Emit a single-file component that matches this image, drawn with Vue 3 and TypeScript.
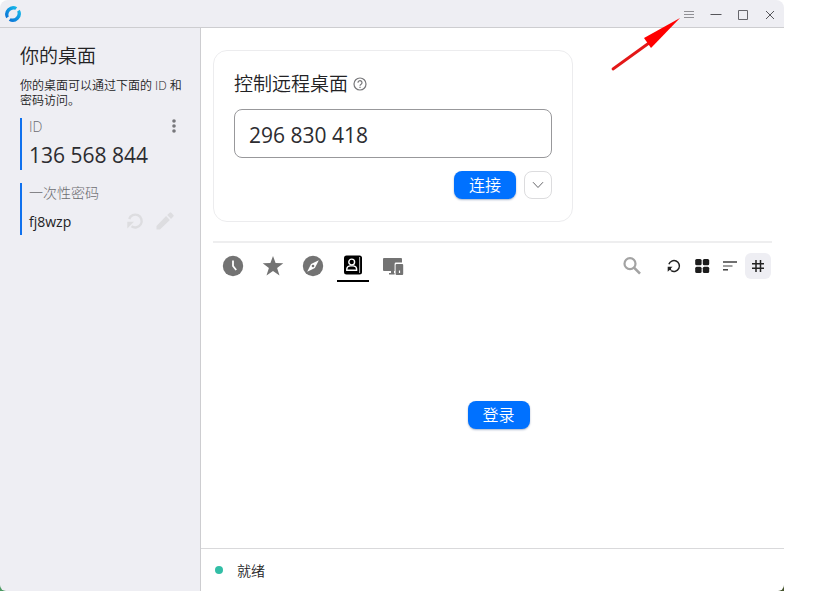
<script setup lang="ts">
import { ref } from 'vue'

const remoteId = ref('296 830 418')
const activeTab = ref('book')

const tabs = [
  { id: 'recent', label: '最近访问过' },
  { id: 'favorites', label: '收藏' },
  { id: 'discovered', label: '已发现' },
  { id: 'book', label: '地址簿' },
  { id: 'devices', label: '可访问的设备' },
]
</script>

<template>
  <div class="page">
    <div class="window">
      <header class="titlebar">
        <svg class="logo" viewBox="0 0 18 18" aria-hidden="true">
          <defs>
            <linearGradient id="logo-fill" x1="1" y1="0" x2="0" y2="1">
              <stop offset="0" stop-color="#18bdea" />
              <stop offset="1" stop-color="#0a6fd6" />
            </linearGradient>
          </defs>
          <g fill="url(#logo-fill)">
            <path d="M13.2 2.2A8.1 8.1 0 0 0 2.2 13.2L4.8 11.4A5.1 5.1 0 0 1 11.4 4.8Z" />
            <path d="M4.8 15.8A8.1 8.1 0 0 0 15.8 4.8L13.2 6.6A5.1 5.1 0 0 1 6.6 13.2Z" />
          </g>
        </svg>
        <div class="window-controls">
          <button type="button" aria-label="菜单">
            <svg viewBox="0 0 12 12"><path d="M1 2.5h10M1 5.5h10M1 8.5h10" stroke="#909095" fill="none" /></svg>
          </button>
          <button type="button" aria-label="最小化">
            <svg viewBox="0 0 12 12"><path d="M0.5 5.5h11" stroke="#55555a" fill="none" /></svg>
          </button>
          <button type="button" aria-label="最大化">
            <svg viewBox="0 0 12 12"><path d="M1.5 1.5h9v9h-9z" stroke="#66666b" fill="none" /></svg>
          </button>
          <button type="button" aria-label="关闭">
            <svg viewBox="0 0 12 12"><path d="M2 2l8 8M10 2l-8 8" stroke="#55555a" fill="none" /></svg>
          </button>
        </div>
      </header>

      <div class="body">
        <aside class="sidebar">
          <h1>你的桌面</h1>
          <p class="hint">你的桌面可以通过下面的 ID 和密码访问。</p>
          <section class="field">
            <div class="field-row id-row">
              <span class="caption">ID</span>
              <button type="button" class="plain more" aria-label="更多">
                <svg viewBox="0 0 18 18" fill="#77777b">
                  <circle cx="9" cy="4" r="1.8" /><circle cx="9" cy="9" r="1.8" /><circle cx="9" cy="14" r="1.8" />
                </svg>
              </button>
            </div>
            <div class="own-id">136 568 844</div>
          </section>
          <section class="field">
            <div class="field-row"><span class="caption">一次性密码</span></div>
            <div class="field-row password-row">
              <span class="password">fj8wzp</span>
              <button type="button" class="plain" aria-label="刷新密码">
                <svg viewBox="0 0 20 20">
                  <path d="M4.2 8A6.4 6.4 0 1 1 6.5 15.2" fill="none" stroke="#dddde0" stroke-width="2.4" />
                  <path d="M2.3 17.5V10.8H9Z" fill="#dddde0" />
                </svg>
              </button>
              <button type="button" class="plain" aria-label="修改密码">
                <svg viewBox="0 0 20 20" fill="#dddde0">
                  <path d="M1.5 15v3.5H5L14.9 8.9 11.1 5.1zM18.4 5.6a1.2 1.2 0 0 0 0-1.7L16.3 1.8a1.2 1.2 0 0 0-1.7 0L12.2 4.1l3.8 3.8z" />
                </svg>
              </button>
            </div>
          </section>
        </aside>

        <main class="main">
          <div class="content">
            <form class="card" @submit.prevent>
              <div class="card-title">
                <label for="remote-id">控制远程桌面</label>
                <svg viewBox="0 0 14 16" fill="none" stroke="#77777a" stroke-width="1.2" aria-hidden="true">
                  <circle cx="7" cy="9" r="6" />
                  <path d="M5 7.7a2 2 0 1 1 3.1 1.6C7.3 9.8 7 10 7 10.8M7 11.7v1.2" />
                </svg>
              </div>
              <input id="remote-id" v-model="remoteId" type="text" />
              <div class="actions">
                <button type="submit" class="primary">连接</button>
                <button type="button" class="drop" aria-label="更多连接方式">
                  <svg viewBox="0 0 12 12"><path d="M1 3.2l5 5.3 5-5.3" fill="none" stroke="#66666a" /></svg>
                </button>
              </div>
            </form>

            <div class="toolbar">
              <nav class="tabs">
                <button
                  v-for="tab in tabs"
                  :key="tab.id"
                  type="button"
                  class="tab"
                  :class="{ active: tab.id === activeTab }"
                  :aria-label="tab.label"
                  @click="activeTab = tab.id"
                >
                  <svg v-if="tab.id === 'recent'" viewBox="0 0 22 22">
                    <circle cx="11" cy="11" r="10.2" fill="currentColor" />
                    <path d="M11 5.5V11l3.2 4" fill="none" stroke="#fff" stroke-width="1.8" />
                  </svg>
                  <svg v-else-if="tab.id === 'favorites'" viewBox="0 0 22 22">
                    <path d="M11 1l2.6 7 7.7.2-6.2 4.7 2.4 7.7L11 16.1l-6.5 4.5 2.4-7.7L.7 8.2l7.7-.2z" fill="currentColor" />
                  </svg>
                  <svg v-else-if="tab.id === 'discovered'" viewBox="0 0 22 22">
                    <circle cx="11" cy="11" r="10.2" fill="currentColor" />
                    <path d="M16.8 5.2l-3.9 7.7-7.7 3.9 3.9-7.7z" fill="#fff" />
                    <circle cx="11" cy="11" r="1.3" fill="currentColor" />
                  </svg>
                  <svg v-else-if="tab.id === 'book'" viewBox="0 0 22 22">
                    <rect x="2" y="0.5" width="18" height="19" rx="2.5" fill="currentColor" />
                    <path d="M17.6 2v16" stroke="#bbb" />
                    <circle cx="9.7" cy="7" r="2.9" fill="none" stroke="#fff" stroke-width="1.4" />
                    <path d="M4.8 15.3v-1.2c0-2 1.7-3 3.2-3.2h3.4c1.5.2 3.2 1.2 3.2 3.2v1.2z" fill="none" stroke="#fff" stroke-width="1.4" />
                  </svg>
                  <svg v-else viewBox="0 0 22 22">
                    <path d="M2 3h17a1 1 0 0 1 1 1v3.5H14a1.4 1.4 0 0 0-1.4 1.4V16H12v2h.6v1.5H7V18h2v-2H2a1 1 0 0 1-1-1V4a1 1 0 0 1 1-1z" fill="currentColor" />
                    <path fill-rule="evenodd" d="M14.6 9h5.6a1 1 0 0 1 1 1v9a1 1 0 0 1-1 1h-5.6a1 1 0 0 1-1-1v-9a1 1 0 0 1 1-1zm2.3 6.6v2.4h1.2v-2.4z" fill="currentColor" />
                  </svg>
                </button>
              </nav>
              <div class="tools">
                <button type="button" class="tool search" aria-label="搜索">
                  <svg viewBox="0 0 20 20" fill="none" stroke="#a3a3a3">
                    <circle cx="8" cy="7.7" r="5.5" stroke-width="2.2" />
                    <path d="M12 11.7l6 6" stroke-width="2.6" />
                  </svg>
                </button>
                <button type="button" class="tool" aria-label="刷新">
                  <svg viewBox="0 0 20 20">
                    <path d="M4.9 8.3A5.4 5.4 0 1 1 7.2 14.6" fill="none" stroke="#222" stroke-width="1.5" />
                    <path d="M3.7 15.7V10.8H8.6L6.9 12.3 7.5 14.8 5.6 14z" fill="#222" />
                  </svg>
                </button>
                <button type="button" class="tool" aria-label="视图">
                  <svg viewBox="0 0 20 20" fill="#1c1c1c">
                    <rect x="3.2" y="3" width="6.4" height="6.2" rx="1.5" />
                    <rect x="10.8" y="3" width="6.4" height="6.2" rx="1.5" />
                    <rect x="3.2" y="10.8" width="6.4" height="6.2" rx="1.5" />
                    <rect x="10.8" y="10.8" width="6.4" height="6.2" rx="1.5" />
                  </svg>
                </button>
                <button type="button" class="tool" aria-label="排序">
                  <svg viewBox="0 0 20 20" fill="none" stroke="#333" stroke-width="1.4">
                    <path d="M3 6h14" /><path d="M3 10h9.5" stroke="#777" /><path d="M3 13.8h5" />
                  </svg>
                </button>
                <button type="button" class="tool selected" aria-label="标签">
                  <svg viewBox="0 0 20 20" fill="none" stroke="#222" stroke-width="1.5">
                    <path d="M8 4v12M12.5 4v12M4 7.7h12M4 12.3h12" />
                  </svg>
                </button>
              </div>
            </div>

            <div class="empty">
              <button type="button" class="primary">登录</button>
            </div>
          </div>

          <footer class="status"><span class="dot"></span>就绪</footer>
        </main>
      </div>

      <svg class="pointer" viewBox="0 0 70 54" aria-hidden="true">
        <path d="M2 51L38 25" stroke="#e31818" stroke-width="2.8" stroke-linecap="round" />
        <path d="M69 0L33 20l7 10z" fill="#f00" />
      </svg>
    </div>
  </div>
</template>

<style>
body {
  background: #fff;
}
</style>

<style scoped>
* {
  box-sizing: border-box;
}
.page {
  min-height: 100vh;
  padding-right: 35px;
  display: flex;
  background:
    linear-gradient(#4c9a62, #4c9a62) left bottom / 6px 6px no-repeat,
    linear-gradient(#46552f, #46552f) right 35px bottom / 6px 6px no-repeat,
    #fff;
  color: #222224;
  font-family: "Open Sans", "Noto Sans CJK SC", sans-serif;
  font-size: 14px;
  font-weight: 350;
}
button,
input {
  font: inherit;
  color: inherit;
}
button {
  padding: 0;
  border: 0;
  background: none;
}
svg {
  display: block;
}
.window {
  position: relative;
  flex: 1;
  min-width: 0;
  display: flex;
  flex-direction: column;
  border-radius: 8px 8px 6px 6px;
  overflow: hidden;
}
.titlebar {
  height: 28px;
  flex: none;
  display: flex;
  align-items: center;
  justify-content: space-between;
  padding: 0 7px 0 4px;
  background: #eeeef3;
  border-bottom: 1px solid #cdcdd0;
}
.logo {
  width: 18px;
  height: 18px;
}
.window-controls {
  display: flex;
  gap: 13px;
  padding-top: 2px;
}
.window-controls button {
  width: 14px;
  height: 14px;
  display: grid;
  place-items: center;
}
.window-controls svg {
  width: 12px;
  height: 12px;
}
.body {
  flex: 1;
  display: flex;
}
.sidebar {
  width: 201px;
  flex: none;
  padding: 14px 16px 0 20px;
  background: #eeeef3;
  border-right: 1px solid #cdcdd0;
}
h1 {
  margin: 0;
  font-size: 19px;
  line-height: 28px;
  font-weight: 350;
}
.hint {
  margin: 8px 0 10px;
  font-size: 12px;
  line-height: 15px;
}
.field {
  height: 52px;
  margin-bottom: 13px;
  padding-left: 7px;
  border-left: 2px solid #0f71ee;
}
.field-row {
  display: flex;
  align-items: center;
  height: 18px;
}
.id-row {
  height: 16px;
  padding-right: 1px;
}
.caption {
  flex: 1;
  color: #6c6c70;
  font-weight: 300;
}
.plain {
  width: 20px;
  height: 20px;
}
.more {
  width: 18px;
  height: 18px;
}
.more svg {
  width: 18px;
  height: 18px;
}
.own-id {
  color: #2c2c30;
  font-size: 21px;
  line-height: 42px;
  font-weight: 400;
}
.password-row {
  height: 40px;
  gap: 10px;
  padding-right: 9px;
}
.password {
  flex: 1;
  font-weight: 400;
}
.main {
  flex: 1;
  min-width: 0;
  display: flex;
  flex-direction: column;
  background: #fff;
}
.content {
  flex: 1;
  display: flex;
  flex-direction: column;
  padding: 22px 12px 0;
}
.card {
  width: 360px;
  max-width: 100%;
  padding: 18px 20px 22px;
  border: 1px solid #ececee;
  border-radius: 14px;
}
.card-title {
  display: flex;
  align-items: center;
  gap: 5px;
  height: 28px;
  font-size: 19px;
}
.card-title svg {
  width: 14px;
  height: 16px;
}
.card input {
  display: block;
  width: 100%;
  height: 49px;
  margin: 12px 0 13px;
  padding: 2px 14px 0;
  border: 1px solid #98989b;
  border-radius: 8px;
  outline: none;
  background: #fff;
  color: #2c2c30;
  font-size: 21px;
  font-weight: 400;
}
.actions {
  display: flex;
  justify-content: flex-end;
  gap: 8px;
}
.primary {
  width: 62px;
  height: 28px;
  border-radius: 8px;
  background: #0071ff;
  box-shadow: 0 1px 2px rgba(0, 40, 100, 0.35);
  color: #fff;
  font-size: 16px;
  line-height: 28px;
}
.drop {
  width: 28px;
  height: 28px;
  display: grid;
  place-items: center;
  border: 1px solid #dcdcde;
  border-radius: 8px;
}
.drop svg {
  width: 12px;
  height: 12px;
}
.toolbar {
  display: flex;
  justify-content: space-between;
  margin-top: 19px;
  padding: 9px 1px 0 4px;
  border-top: 2px solid #eeeeef;
}
.tabs {
  display: flex;
  gap: 8px;
}
.tab {
  width: 32px;
  height: 30px;
  display: flex;
  justify-content: center;
  padding-top: 3px;
  border-bottom: 2px solid transparent;
  color: #737373;
}
.tab.active {
  color: #000;
  border-color: #000;
}
.tab svg {
  width: 22px;
  height: 22px;
}
.tools {
  display: flex;
  gap: 2px;
  padding-top: 1px;
}
.tool {
  width: 26px;
  height: 26px;
  display: grid;
  place-items: center;
  border-radius: 6px;
}
.tool svg {
  width: 20px;
  height: 20px;
}
.search {
  margin-right: 14px;
}
.selected {
  background: #eeeef3;
}
.empty {
  flex: 1;
  display: grid;
  place-items: center;
  padding-left: 12px;
}
.status {
  height: 43px;
  flex: none;
  display: flex;
  align-items: center;
  gap: 14px;
  padding-left: 14px;
  border-top: 1px solid #d9d9db;
}
.dot {
  width: 8px;
  height: 8px;
  border-radius: 50%;
  background: #32bea6;
}
.pointer {
  position: absolute;
  top: 18px;
  right: 103px;
  width: 70px;
  height: 54px;
  pointer-events: none;
}
</style>
